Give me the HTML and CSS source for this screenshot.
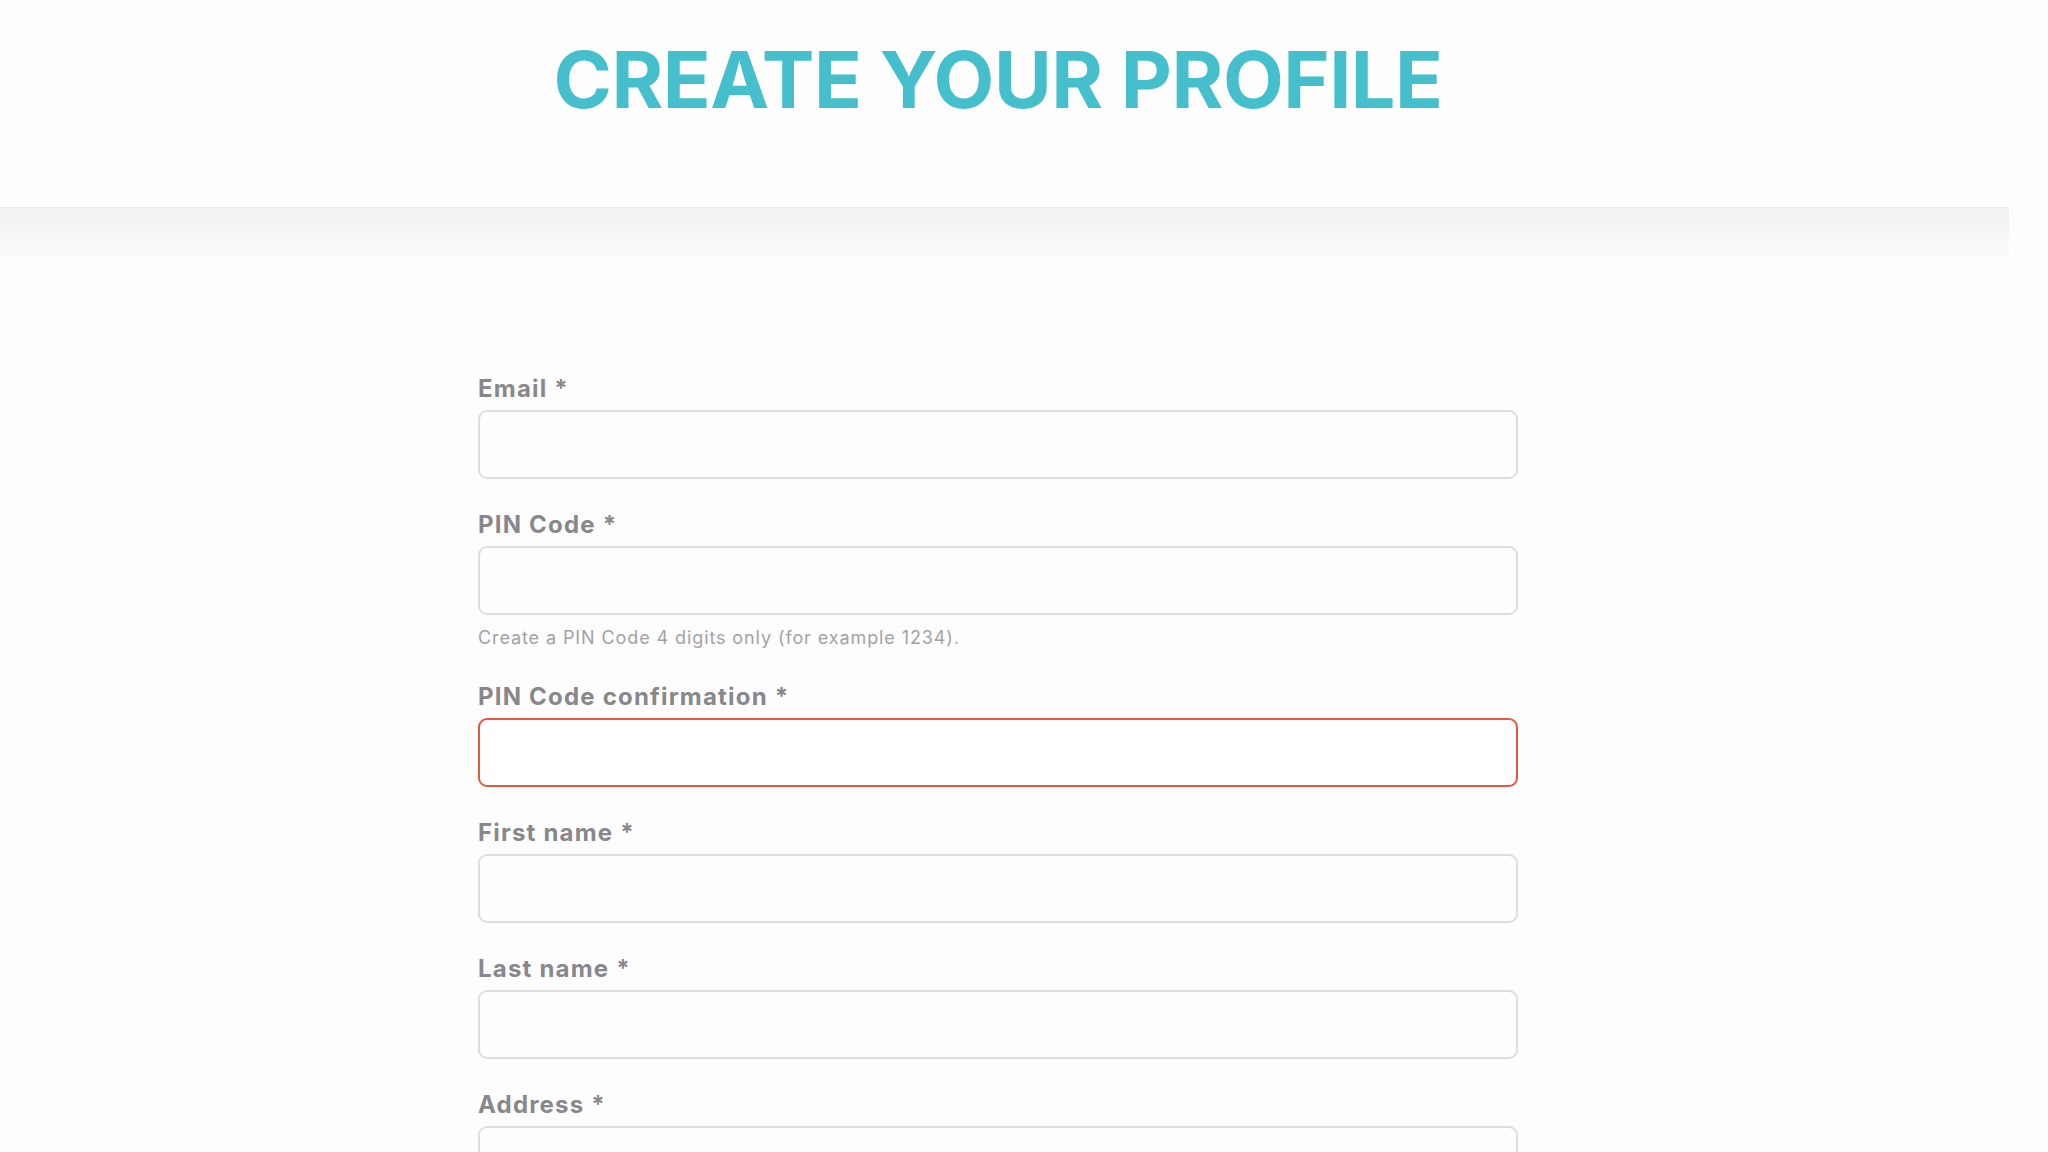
FILE: index.html
```html
<!DOCTYPE html>
<html lang="en">
<head>
<meta charset="utf-8">
<title>Create your profile</title>
<link rel="stylesheet" href="styles.css">
</head>
<body>
<div class="page">
  <header class="header">
    <h1 class="title">CREATE YOUR PROFILE</h1>
  </header>
  <div class="band"></div>
  <main class="content">
    <form class="form">
      <div class="field">
        <label class="label">Email *</label>
        <input class="input" type="email">
      </div>
      <div class="field">
        <label class="label">PIN Code *</label>
        <input class="input" type="password">
        <p class="help">Create a PIN Code 4 digits only (for example 1234).</p>
      </div>
      <div class="field">
        <label class="label">PIN Code confirmation *</label>
        <input class="input input-error" type="password">
      </div>
      <div class="field">
        <label class="label">First name *</label>
        <input class="input" type="text">
      </div>
      <div class="field">
        <label class="label">Last name *</label>
        <input class="input" type="text">
      </div>
      <div class="field">
        <label class="label">Address *</label>
        <input class="input" type="text">
      </div>
    </form>
  </main>
</div>
</body>
</html>
```
FILE: styles.css
```css
html, body {
  margin: 0;
  padding: 0;
  background: #fdfdfd;
  overflow: hidden;
}
body {
  font-family: "Inter", "Liberation Sans", sans-serif;
}
.page {
  width: 2048px;
}
.header {
  width: 1996px;
  height: 207px;
  box-sizing: border-box;
  padding-top: 40px;
  display: flex;
  justify-content: center;
  background: #fdfdfd;
}
.title {
  margin: 0;
  font-family: "Inter", "Liberation Sans", sans-serif;
  font-weight: 700;
  font-size: 79px;
  line-height: 79px;
  color: #46bfcc;
  letter-spacing: -0.5px;
}
.band {
  width: 2009px;
  height: 48px;
  border-top: 1px solid #ebeaec;
  background: linear-gradient(#f1f0f3, #f8f7f9 60%, #fafafb);
}
.content {
  width: 1996px;
  display: flex;
  justify-content: center;
  padding-top: 118px;
}
.form {
  width: 1040px;
  display: flex;
  flex-direction: column;
}
.field {
  display: flex;
  flex-direction: column;
  margin-bottom: 31px;
}
.label {
  font-size: 24px;
  line-height: 30px;
  font-weight: 700;
  color: #88878b;
  letter-spacing: 1.2px;
  margin-bottom: 6px;
}
.input {
  height: 69px;
  box-sizing: border-box;
  border: 2px solid #dedde0;
  border-radius: 9px;
  background: #fefefe;
  margin: 0;
  padding: 0 16px;
  font-size: 20px;
  outline: none;
}
.input-error {
  border-color: #e8583f;
  background: #ffffff;
}
.help {
  margin: 12px 0 2px;
  font-size: 18px;
  line-height: 22px;
  letter-spacing: 0.9px;
  color: #a3a2a6;
}
```
